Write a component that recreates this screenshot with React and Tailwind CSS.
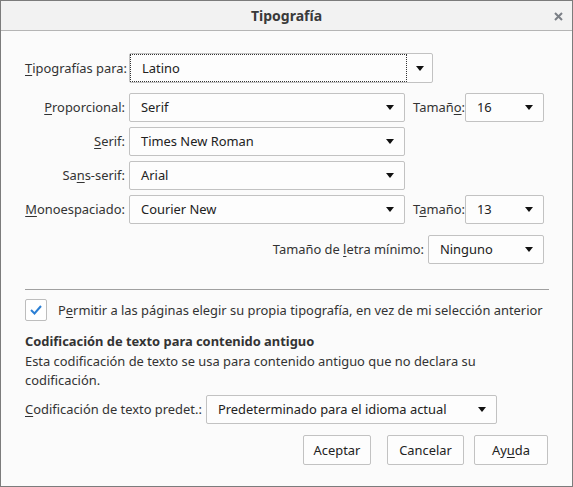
import React from "react";

const FONT = { fontFamily: '"Noto Sans", "Open Sans", sans-serif' };

// Label with one access-key letter underlined.
const Key = ({ text, k }) => {
  const i = text.indexOf(k);
  return (
    <span>
      {text.slice(0, i)}
      <span className="underline underline-offset-2">{text[i]}</span>
      {text.slice(i + 1)}
    </span>
  );
};

const Arrow = () => (
  <svg width="8" height="5" viewBox="0 0 8 5" className="shrink-0">
    <path d="M0 0h8L4 5z" fill="#111" />
  </svg>
);

const Select = ({ value, className = "" }) => (
  <div
    className={`flex h-[29px] shrink-0 items-center justify-between rounded-[2px] border border-[#c2c2c2] bg-[#fdfdfd] pl-[11px] pr-[10px] text-[#222] ${className}`}
  >
    <span className="whitespace-nowrap">{value}</span>
    <Arrow />
  </div>
);

const Label = ({ children, className = "" }) => (
  <div className={`shrink-0 whitespace-nowrap text-right text-[#333] ${className}`}>{children}</div>
);

const Row = ({ label, children, className = "" }) => (
  <div className={`flex items-center ${className}`}>
    <Label className="w-[104px] pr-[4px]">{label}</Label>
    {children}
  </div>
);

const Button = ({ children, className = "" }) => (
  <div
    className={`flex h-[30px] items-center justify-center rounded-[2px] border border-[#c2c2c2] bg-[#fdfdfd] text-[#222] ${className}`}
  >
    {children}
  </div>
);

export default function App() {
  return (
    <div
      style={FONT}
      className="flex h-[487px] w-[573px] flex-col border border-[#7c7c7c] bg-[#fbfbfb] text-[12.9px] leading-[19px]"
    >
      <div className="relative flex h-[30px] shrink-0 items-center justify-center border-b border-[#b5b5b5] bg-[#f2f2f2]">
        <span className="text-[14px] font-bold text-[#3a3a3a]">Tipografía</span>
        <svg width="9" height="9" viewBox="0 0 9 9" className="absolute right-[9px] top-[11px]">
          <path d="M1 1l7 7M8 1L1 8" stroke="#7b7f86" strokeWidth="2" />
        </svg>
      </div>

      <div className="flex flex-col pl-[24px] pr-[23px] pt-[22px]">
        <Row label={<Key text="Tipografías para:" k="T" />}>
          <div className="flex h-[30px] w-[304px] rounded-[2px] border border-[#c2c2c2] bg-[#fdfdfd]">
            <div className="flex flex-1 items-center border border-dotted border-[#333] pl-[11px] text-[#222]">
              Latino
            </div>
            <div className="flex w-[25px] items-center justify-center">
              <Arrow />
            </div>
          </div>
        </Row>

        <Row label={<Key text="Proporcional:" k="P" />} className="mt-[10px]">
          <Select value="Serif" className="w-[276px]" />
          <Label className="ml-[4px] w-[56px] text-left">
            <Key text="Tamaño:" k="o" />
          </Label>
          <Select value="16" className="w-[79px]" />
        </Row>

        <Row label={<Key text="Serif:" k="S" />} className="mt-[5px]">
          <Select value="Times New Roman" className="w-[276px]" />
        </Row>

        <Row label={<Key text="Sans-serif:" k="n" />} className="mt-[5px]">
          <Select value="Arial" className="w-[276px]" />
        </Row>

        <Row label={<Key text="Monoespaciado:" k="M" />} className="mt-[5px]">
          <Select value="Courier New" className="w-[276px]" />
          <Label className="ml-[4px] w-[56px] text-left">
            <Key text="Tamaño:" k="a" />
          </Label>
          <Select value="13" className="w-[79px]" />
        </Row>

        <div className="mt-[11px] flex w-[519px] items-center justify-end">
          <Label className="pr-[4px]">
            <Key text="Tamaño de letra mínimo:" k="l" />
          </Label>
          <Select value="Ninguno" className="w-[116px]" />
        </div>

        <div className="mt-[25px] h-px w-[524px] bg-[#a0a0a0]" />

        <div className="mt-[9px] flex items-center">
          <div className="flex h-[22px] w-[22px] items-center justify-center rounded-[2px] border border-[#bdbdbd] bg-white">
            <svg width="12" height="10" viewBox="0 0 12 10">
              <path d="M1 5l3.5 3.5L11 1" fill="none" stroke="#2b7fd4" strokeWidth="2" />
            </svg>
          </div>
          <span className="ml-[11px] whitespace-nowrap text-[#333]">
            <Key
              text="Permitir a las páginas elegir su propia tipografía, en vez de mi selección anterior"
              k="e"
            />
          </span>
        </div>

        <div className="mt-[11px] font-bold text-[#333]">
          Codificación de texto para contenido antiguo
        </div>
        <div className="mt-[1px] text-[#333]">
          Esta codificación de texto se usa para contenido antiguo que no declara su codificación.
        </div>

        <div className="mt-[5px] flex items-center">
          <Label className="pr-[4px]">
            <Key text="Codificación de texto predet.:" k="C" />
          </Label>
          <Select value="Predeterminado para el idioma actual" className="w-[291px]" />
        </div>

        <div className="mt-[11px] flex justify-end gap-[10px] pr-[1px]">
          <Button className="w-[68px]">Aceptar</Button>
          <Button className="ml-[6px] w-[77px]">Cancelar</Button>
          <Button className="w-[74px]">
            <Key text="Ayuda" k="u" />
          </Button>
        </div>
      </div>
    </div>
  );
}
